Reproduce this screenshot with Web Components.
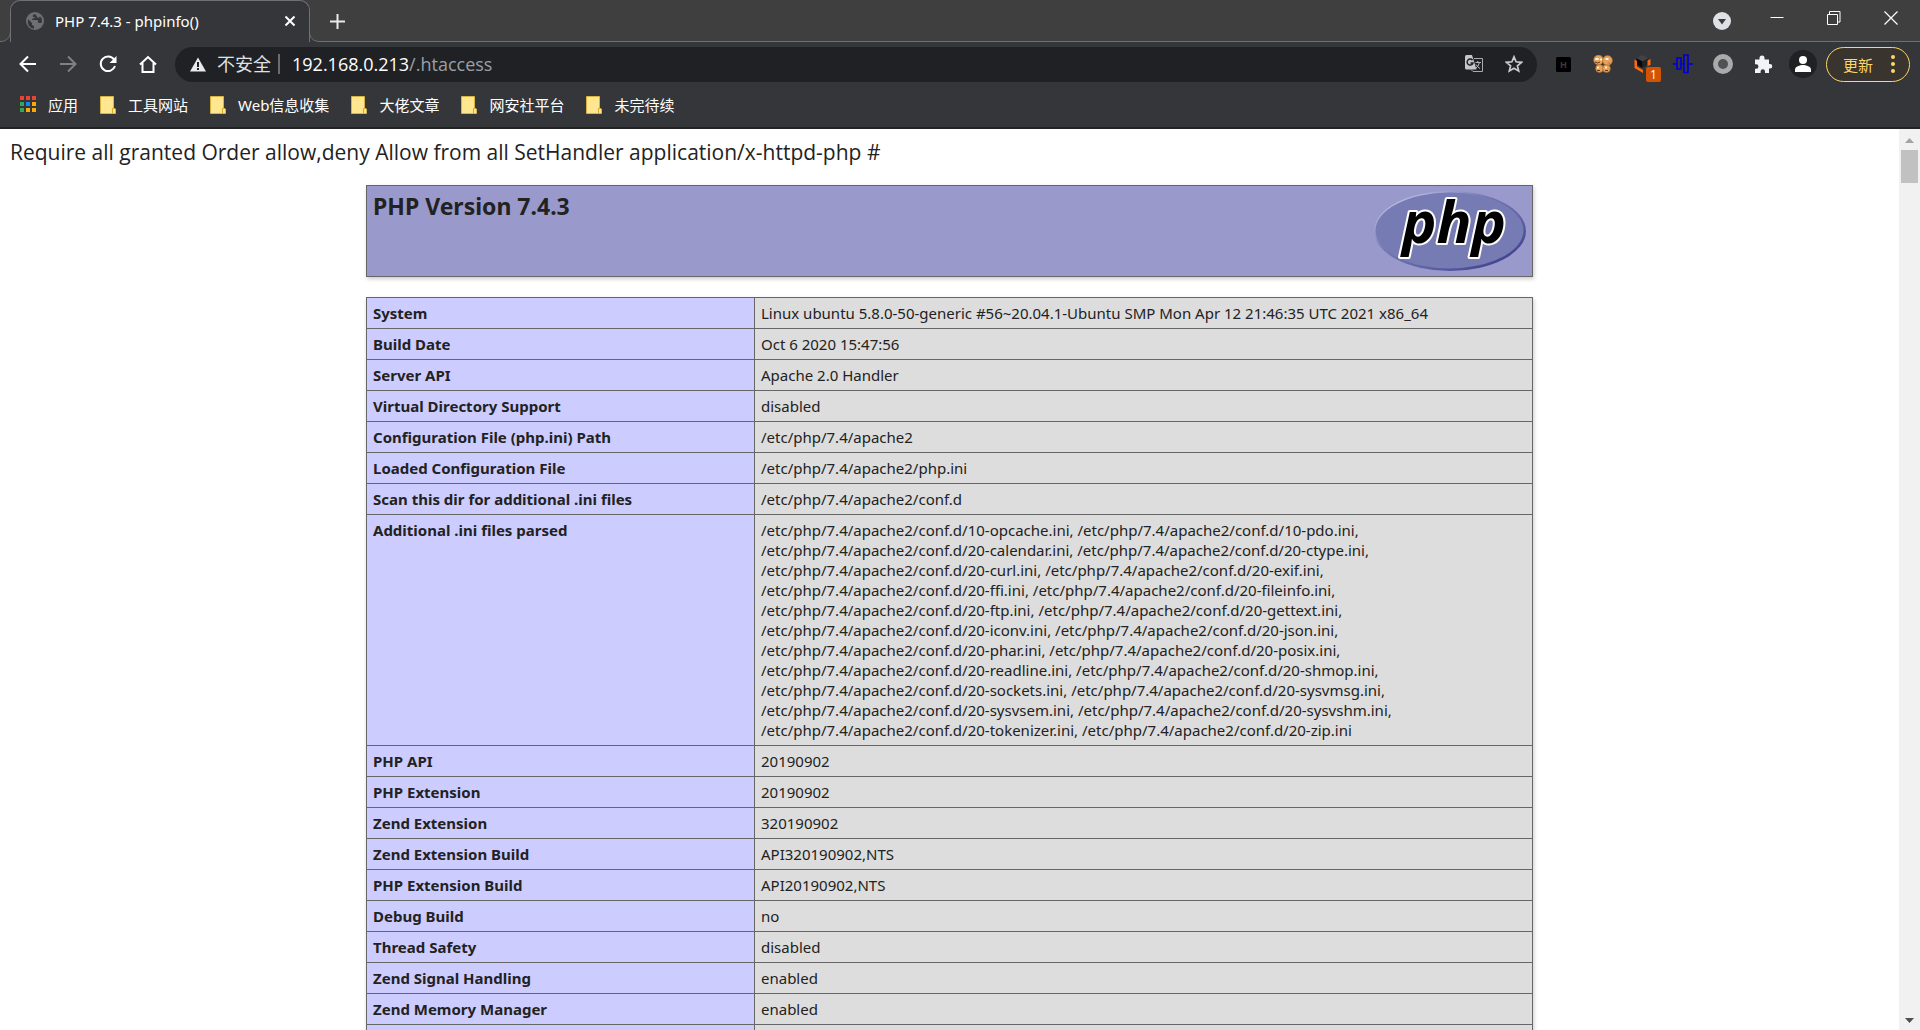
<!DOCTYPE html>
<html lang="zh-CN">
<head>
<meta charset="utf-8">
<title>PHP 7.4.3 - phpinfo()</title>
<style>
  html, body { margin: 0; height: 100%; }
  body { font-family: "Open Sans", "Noto Sans CJK SC", sans-serif; overflow: hidden; }
</style>
</head>
<body>
<browser-window></browser-window>

<template id="t-window">
  <style>
    :host { display: flex; flex-direction: column; height: 100vh; background: #fff; }
    page-view { flex: 1; min-height: 0; }
  </style>
  <tab-strip></tab-strip>
  <tool-bar></tool-bar>
  <bookmark-bar>
    <bookmark-item kind="apps">应用</bookmark-item>
    <bookmark-item>工具网站</bookmark-item>
    <bookmark-item>Web信息收集</bookmark-item>
    <bookmark-item>大佬文章</bookmark-item>
    <bookmark-item>网安社平台</bookmark-item>
    <bookmark-item>未完待续</bookmark-item>
  </bookmark-bar>
  <page-view>
    <php-info></php-info>
  </page-view>
</template>

<template id="t-tabs">
  <style>
    :host { display: flex; height: 42px; background: #3f3f3f; box-shadow: inset 0 -1px #707072; color: #fff; padding-right: 1px; }
    .curve { width: 10px; height: 42px; flex: none; }
    .tab { box-sizing: border-box; width: 300px; height: 42px; display: flex; align-items: center; background: #35363a;
      border: 1px solid #707072; border-bottom: 0; border-radius: 10px 10px 0 0; padding: 0 9px 1px 15px; gap: 11px; }
    .title { flex: 1; font-family: "Noto Sans", sans-serif; font-size: 15px; line-height: 20px; white-space: nowrap; }
    button { all: unset; display: flex; align-items: center; justify-content: center; cursor: pointer; }
    .x { width: 20px; height: 20px; }
    .plus { width: 35px; height: 42px; }
    .fill { flex: 1; }
    .search { width: 40px; height: 42px; margin-right: 6px; }
    .win { width: 57px; height: 36px; }
    svg { display: block; }
  </style>
  <svg class="curve" viewBox="0 0 10 42"><path d="M0 41.5C6 41.5 10.500 38 10.500 31V42H0Z" fill="#35363a"/><path d="M0 41.500C6 41.500 10.500 38 10.500 31" fill="none" stroke="#707072"/></svg>
  <div class="tab">
    <svg width="18" height="18" viewBox="0 0 18 18"><circle cx="9" cy="9" r="9" fill="#6c6f73"/><path d="M2 7l4 4v2l2 1v2.500C4 16.500 1 13 2 7ZM9 2c-3 1.500-3.500 3 0 3 0 1.500-3 1-3 3h5c2 0 0 3 2 3h2.500c1-3 .5-5-1.500-6.500-1 2-3 1.500-3 0Z" fill="#35363a"/></svg>
    <span class="title">PHP 7.4.3 - phpinfo()</span>
    <button class="x" aria-label="关闭标签页"><svg width="12" height="12"><path d="M1.500 1.500l9 9M10.500 1.500l-9 9" stroke="#fff" stroke-width="2"/></svg></button>
  </div>
  <svg class="curve" viewBox="0 0 10 42"><path d="M10 41.500C3 41.500-.5 38-.5 31V42H10Z" fill="#35363a"/><path d="M10 41.500C3 41.500-.5 38-.5 31" fill="none" stroke="#707072"/></svg>
  <button class="plus" aria-label="新标签页"><svg width="15" height="15"><path d="M7.500 0v15M0 7.500h15" stroke="#e8eaed" stroke-width="2"/></svg></button>
  <span class="fill"></span>
  <button class="search" aria-label="搜索标签页"><svg width="18" height="18"><circle cx="9" cy="9" r="9" fill="#dfe1e5"/><path d="M5 7h8l-4 5.500Z" fill="#3c3c3c"/></svg></button>
  <button class="win" aria-label="最小化"><svg width="14" height="14"><path d="M.5 6.500h13" stroke="#fff"/></svg></button>
  <button class="win" aria-label="还原"><svg width="14" height="14"><path d="M.5 3.500h10v10H.5ZM2.500 3V.5h10.500v10.500h-2" fill="none" stroke="#fff"/></svg></button>
  <button class="win" aria-label="关闭"><svg width="14" height="14"><path d="M.5.5l13 13M13.500.5l-13 13" stroke="#fff" stroke-width="1.200"/></svg></button>
</template>

<template id="t-tool">
  <style>
    :host { display: flex; align-items: center; height: 46px; background: #35363a; padding: 0 10px 1px 8px; box-sizing: border-box; }
    button { all: unset; box-sizing: border-box; width: 40px; height: 35px; padding-bottom: 1px; flex: none; display: flex; align-items: center; justify-content: center; cursor: pointer; position: relative; }
    svg { display: block; }
    .omni { flex: 1; min-width: 0; height: 35px; margin: 0 6px 0 7px; border-radius: 18px; background: #202124; display: flex; align-items: center; padding: 0 3px 1px 14px; box-sizing: border-box; font-size: 18px; line-height: 24px; color: #fff; }
    .warn { margin-right: 10px; }
    .unsafe { color: #dfe1e5; }
    .rule { width: 2px; height: 20px; background: #6a6c70; margin: 0 12px 0 7px; }
    input { all: unset; flex: 1; min-width: 0; color: #9aa0a6; }
    .badge { position: absolute; left: 23px; top: 20px; width: 15px; height: 15px; border-radius: 2px; background: #d35400; color: #fff; font-size: 12px; line-height: 15px; text-align: center; }
    .update { width: 84px; border: 1px solid #fdd663; border-radius: 18px; background: #3a342f; color: #fdd663; font-size: 15px; justify-content: flex-start; padding-left: 16px; gap: 18px; margin-left: 3px; }
  </style>
  <button aria-label="后退"><svg width="18" height="18"><path d="M17 9H2M9 1.500L1.500 9 9 16.500" fill="none" stroke="#fff" stroke-width="2"/></svg></button>
  <button aria-label="前进"><svg width="18" height="18"><path d="M1 9h15M9 1.500L16.500 9 9 16.500" fill="none" stroke="#808185" stroke-width="2"/></svg></button>
  <button aria-label="重新加载"><svg width="18" height="18"><path d="M15 4.500A7.300 7.300 0 1 0 16 11" fill="none" stroke="#fff" stroke-width="2"/><path d="M17.500 1V8H10.500Z" fill="#fff"/></svg></button>
  <button aria-label="主页"><svg width="18" height="18"><path d="M1 9.500L9 2l8 7.500M3.500 8v9h11V8" fill="none" stroke="#fff" stroke-width="2"/></svg></button>
  <div class="omni">
    <svg class="warn" width="18" height="16"><path d="M9 1.500L17 15.500H1Z" fill="#e8eaed"/><path d="M9 6v5M9 12v2" stroke="#202124" stroke-width="2"/></svg>
    <span class="unsafe">不安全</span><span class="rule"></span>
    <label for="url">192.168.0.213</label><input id="url" value="/.htaccess">
    <button aria-label="翻译此页"><svg width="18" height="18"><path d="M9 3.500h8.500v13H8l-2-2" fill="none" stroke="#a9abae"/><path d="M1.500 0H7l4.500 14.500h-10Q0 14.500 0 13V1.500Q0 0 1.500 0Z" fill="#c4c6c9"/><path d="M7.500 5.200A3 3 0 1 0 8 8H5.500" fill="none" stroke="#202124" stroke-width="1.500"/><path d="M10.500 7.500h5.500M12.800 6v1.500M14.500 7.500q-1 4-4 6M11 9.500q2 3 4 4" fill="none" stroke="#b5b7ba"/></svg></button>
    <button aria-label="为此标签页添加书签"><svg width="18" height="18"><path d="M9 1.800l2.100 5 5.400.5-4.100 3.500 1.300 5.300L9 13.300l-4.700 2.800 1.300-5.300L1.500 7.300l5.400-.5Z" fill="none" stroke="#c8cacd" stroke-width="1.700"/></svg></button>
  </div>
  <button aria-label="扩展程序 H"><svg width="15" height="15"><rect width="15" height="15" rx="1.500" fill="#000"/><text x="7.500" y="11" text-anchor="middle" font-size="9" font-weight="700" fill="#3b3b3d">H</text></svg></button>
  <button aria-label="Cookie 编辑器"><svg width="20" height="18"><g fill="#e3a35a" stroke="#a86424" stroke-width=".6"><circle cx="5.500" cy="5" r="4.900"/><circle cx="14.500" cy="5.500" r="4.900"/><circle cx="6.500" cy="13.500" r="3.900"/><circle cx="13.500" cy="13.500" r="3.900"/></g><g fill="#fff"><ellipse cx="4" cy="4" rx="2" ry="1"/><ellipse cx="8" cy="4.500" rx="1.200" ry="1"/><ellipse cx="14" cy="4" rx="1.700" ry="1"/><circle cx="5" cy="12.500" r="1"/><circle cx="13" cy="12.500" r="1"/></g><path d="M2 7q3 2 5 0M4 15.500h3M12 15.500h3" stroke="#633713" fill="none"/><path d="M14 8l3-1v2Z" fill="#ee5b9a"/></svg></button>
  <button aria-label="扩展程序 1"><svg width="18" height="18"><path d="M8.500 0l6 3.200-6 3.300-6-3.300Z" fill="#424244"/><path d="M2.500 3.200l6 3.300V13l-6-3.500Z" fill="#080808"/><path d="M14.500 3.200l-6 3.300V13l6-3.500Z" fill="#222"/><path d="M.5 4.500L3 6v5.500l6 3.500v3L.5 13ZM16.500 4l-3 1.500V11l3-1Z" fill="#ff6a0d"/></svg><span class="badge">1</span></button>
  <button aria-label="代理扩展"><svg width="20" height="20"><path d="M0 10h4M8 10h3M16 10h4M4 4h4v11H4ZM11 1h4v17.500h-4Z" fill="none" stroke="#0000d0" stroke-width="1.700"/></svg></button>
  <button aria-label="圆环扩展"><svg width="20" height="20"><circle cx="10" cy="10" r="7.500" fill="#505155" stroke="#aaa" stroke-width="5"/></svg></button>
  <button aria-label="扩展程序"><svg width="19" height="19"><path d="M1 4.500h4.500V3a2.500 2.500 0 0 1 5 0v1.500H15V9h1a2.300 2.300 0 0 1 0 4.600H15V18h-4v-1.500a2.200 2.200 0 0 0-4.400 0V18H1v-4.200h1.200a2.200 2.200 0 0 0 0-4.500H1Z" fill="#f1f3f4"/></svg></button>
  <button aria-label="用户"><svg width="28" height="28"><circle cx="14" cy="14" r="14" fill="#202124"/><circle cx="14" cy="10" r="4" fill="#fff"/><path d="M6 22v-2.500c0-3 5-4.500 8-4.500s8 1.500 8 4.500V22Z" fill="#fff"/></svg></button>
  <button class="update">更新<svg width="4" height="18"><circle cx="2" cy="2" r="2" fill="#fdd663"/><circle cx="2" cy="9" r="2" fill="#fdd663"/><circle cx="2" cy="16" r="2" fill="#fdd663"/></svg></button>
</template>

<template id="t-bookmarks">
  <style>:host { display: flex; align-items: center; gap: 22px; height: 41px; box-sizing: border-box; padding: 0 20px 6px; background: #35363a; border-bottom: 2px solid #222326; }</style>
  <slot></slot>
</template>

<template id="t-bookmark">
  <style>
    :host { display: block; }
    a { display: flex; align-items: center; gap: 12px; color: #fff; text-decoration: none; font-family: "Noto Sans", "Noto Sans CJK SC", sans-serif; font-size: 15px; line-height: 20px; white-space: nowrap; }
    svg { display: block; }
    .apps, :host([kind="apps"]) .folder { display: none; }
    :host([kind="apps"]) .apps { display: block; }
  </style>
  <a href="#">
    <svg class="apps" width="16" height="17"><path d="M0 0h4v4H0ZM6 0h4v4H6ZM12 0h4v4h-4Z" fill="#ea4335"/><path d="M0 6h4v4H0ZM0 12h4v4H0Z" fill="#34a853"/><path d="M6 6h4v4H6Z" fill="#1a84f0"/><path d="M6 12h4v4H6ZM12 6h4v4h-4ZM12 12h4v4h-4Z" fill="#fbaa05"/></svg>
    <svg class="folder" width="16" height="18"><path d="M.5.5h13v11.500l2 1v4.500H.5Z" fill="#ffe68f" stroke="#d9b33f"/><path d="M12.500 17.500v-5h2" fill="none" stroke="#d9a92a"/></svg>
    <slot></slot>
  </a>
</template>

<template id="t-page">
  <style>
    :host { display: flex; background: #fff; color: #222; overflow: hidden; }
    main { flex: 1; min-width: 0; overflow: hidden; padding: 10px 10px 0; }
    .bar { width: 21px; flex: none; background: #f1f1f1; display: flex; flex-direction: column; align-items: center; }
    .thumb { width: 17px; height: 33px; background: #c1c1c1; }
    .gap { flex: 1; }
    svg { display: block; width: 9px; height: 21px; }
  </style>
  <main><slot></slot></main>
  <div class="bar"><svg viewBox="0 0 9 21"><path d="M0 14L4.500 9 9 14Z" fill="#a3a3a3"/></svg><div class="thumb"></div><div class="gap"></div><svg viewBox="0 0 9 21"><path d="M0 9h9l-4.500 5Z" fill="#505050"/></svg></div>
</template>

<template id="t-info">
  <style>
    :host { display: block; font-size: 21px; line-height: 26px; }
    p { margin: 0 0 20px; }
    .head, table { width: 1167px; max-width: 100%; box-sizing: border-box; margin: 0 auto 20px; box-shadow: 1px 2px 4px #ccc; }
    .head { display: flex; justify-content: space-between; align-items: flex-start; border: 1px solid #666; background: #9999cc; padding: 5px 6px; }
    h1 { margin: 0; font-family: "Noto Sans", sans-serif; font-size: 23px; line-height: 31px; font-weight: 700; }
    .logo { width: 152px; height: 80px; display: block; overflow: visible; }
    table { border-collapse: collapse; table-layout: fixed; font-family: "Noto Sans", sans-serif; font-size: 15px; line-height: 20px; }
    th, td { border: 1px solid #666; padding: 5px 6px; vertical-align: baseline; text-align: left; }
    th { width: 388px; box-sizing: border-box; background: #ccccff; font-weight: 700; }
    td { background: #dddddd; }
    td span { white-space: nowrap; }
    tr.more > * { height: 20px; }
  </style>
  <p>Require all granted Order allow,deny Allow from all SetHandler application/x-httpd-php #</p>
  <div class="head">
    <h1>PHP Version 7.4.3</h1>
    <svg class="logo" viewBox="0 0 152 80" role="img" aria-label="PHP logo">
      <defs>
        <linearGradient id="edge" x1="0" y1="0" x2="1" y2="1"><stop offset=".15" stop-color="#b4b7df"/><stop offset=".4" stop-color="#7478b4"/><stop offset=".65" stop-color="#6064a6"/><stop offset=".85" stop-color="#434790"/></linearGradient>
      </defs>
      <ellipse cx="76" cy="40" rx="76" ry="40" fill="url(#edge)"/>
      <ellipse cx="75.500" cy="39.500" rx="74" ry="38" fill="#777bb3"/>
      <text x="80" y="52" text-anchor="middle" font-family="Noto Sans" font-size="58" font-weight="700" font-style="italic" fill="#000" stroke="#fff" stroke-width="4" stroke-linejoin="round" paint-order="stroke">php</text>
    </svg>
  </div>
  <table><tbody></tbody></table>
</template>

<script>
  const ini = ['10-opcache', '10-pdo', '20-calendar', '20-ctype', '20-curl', '20-exif', '20-ffi', '20-fileinfo',
    '20-ftp', '20-gettext', '20-iconv', '20-json', '20-phar', '20-posix', '20-readline', '20-shmop',
    '20-sockets', '20-sysvmsg', '20-sysvsem', '20-sysvshm', '20-tokenizer', '20-zip'];
  const rows = [
    ['System', 'Linux ubuntu 5.8.0-50-generic #56~20.04.1-Ubuntu SMP Mon Apr 12 21:46:35 UTC 2021 x86_64'],
    ['Build Date', 'Oct 6 2020 15:47:56'],
    ['Server API', 'Apache 2.0 Handler'],
    ['Virtual Directory Support', 'disabled'],
    ['Configuration File (php.ini) Path', '/etc/php/7.4/apache2'],
    ['Loaded Configuration File', '/etc/php/7.4/apache2/php.ini'],
    ['Scan this dir for additional .ini files', '/etc/php/7.4/apache2/conf.d'],
    ['Additional .ini files parsed', ini.map(n => '/etc/php/7.4/apache2/conf.d/' + n + '.ini')],
    ['PHP API', '20190902'],
    ['PHP Extension', '20190902'],
    ['Zend Extension', '320190902'],
    ['Zend Extension Build', 'API320190902,NTS'],
    ['PHP Extension Build', 'API20190902,NTS'],
    ['Debug Build', 'no'],
    ['Thread Safety', 'disabled'],
    ['Zend Signal Handling', 'enabled'],
    ['Zend Memory Manager', 'enabled'],
    ['', '']
  ];

  class TemplateElement extends HTMLElement {
    constructor() {
      super();
      this.attachShadow({ mode: 'open' })
        .append(document.getElementById(this.constructor.template).content.cloneNode(true));
    }
  }
  class BrowserWindow extends TemplateElement { static template = 't-window'; }
  class TabStrip extends TemplateElement { static template = 't-tabs'; }
  class ToolBar extends TemplateElement { static template = 't-tool'; }
  class BookmarkBar extends TemplateElement { static template = 't-bookmarks'; }
  class BookmarkItem extends TemplateElement { static template = 't-bookmark'; }
  class PageView extends TemplateElement { static template = 't-page'; }
  class PhpInfo extends TemplateElement {
    static template = 't-info';
    constructor() {
      super();
      const body = this.shadowRoot.querySelector('tbody');
      for (const [name, value] of rows) {
        const tr = body.insertRow();
        if (!name) tr.className = 'more';
        const th = document.createElement('th');
        th.scope = 'row';
        th.textContent = name;
        tr.append(th);
        const td = tr.insertCell();
        if (Array.isArray(value)) {
          // Each path stays whole; lines break only between paths.
          value.forEach((path, i) => {
            const span = document.createElement('span');
            span.textContent = i < value.length - 1 ? path + ',' : path;
            td.append(span, ' ');
          });
        } else {
          td.textContent = value;
        }
      }
    }
  }
  customElements.define('tab-strip', TabStrip);
  customElements.define('tool-bar', ToolBar);
  customElements.define('bookmark-item', BookmarkItem);
  customElements.define('bookmark-bar', BookmarkBar);
  customElements.define('php-info', PhpInfo);
  customElements.define('page-view', PageView);
  customElements.define('browser-window', BrowserWindow);
</script>
</body>
</html>
